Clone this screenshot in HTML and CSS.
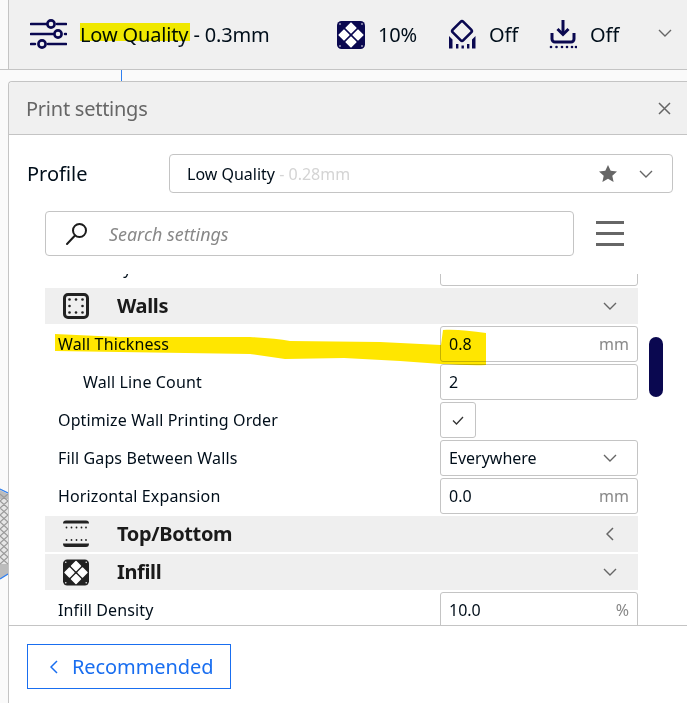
FILE: index.html
```html
<!DOCTYPE html>
<html lang="en">
<head>
<meta charset="utf-8">
<title>Print settings</title>
<link rel="stylesheet" href="styles.css">
</head>
<body>
<svg class="defs" width="0" height="0" aria-hidden="true">
  <symbol id="chev-down" viewBox="0 0 14 8"><path d="M1 1l6 6 6-6" fill="none" stroke="currentColor" stroke-width="1.4"/></symbol>
  <symbol id="chev-left" viewBox="0 0 8 14"><path d="M7 1L1 7l6 6" fill="none" stroke="currentColor" stroke-width="1.5"/></symbol>
  <symbol id="infill" viewBox="0 0 28 28">
    <rect x="0" y="0" width="28" height="28" rx="4.5" fill="currentColor"/>
    <g fill="#fff" stroke="#fff" stroke-width="1.6" stroke-linejoin="round">
      <path d="M14 2.200l4.800 4.800-4.800 4.800L9.200 7z"/>
      <path d="M7 9.200l4.800 4.800L7 18.800 2.200 14z"/>
      <path d="M21 9.200l4.800 4.800-4.800 4.800-4.800-4.800z"/>
      <path d="M14 16.200l4.800 4.800-4.800 4.800L9.200 21z"/>
    </g>
    <g fill="#fff">
      <circle cx="3" cy="3" r=".8"/><circle cx="25" cy="3" r=".8"/><circle cx="3" cy="25" r=".8"/><circle cx="25" cy="25" r=".8"/>
    </g>
  </symbol>
</svg>

<div class="page">
  <header class="topbar">
    <svg class="icon-sliders" width="37" height="30" viewBox="0 0 37 30">
      <g fill="none" stroke="#0a0850" stroke-width="2.6" stroke-linecap="round">
        <path d="M1 5h16M27 5h9M1 15h22M35 15h1M1 25h4M18 25h18"/>
        <circle cx="21" cy="5" r="3.6"/><circle cx="28" cy="15" r="3.6"/><circle cx="12" cy="25" r="3.6"/>
      </g>
    </svg>
    <span class="top-title">Low Quality - 0.3mm</span>
    <div class="top-item item-infill">
      <svg class="top-icon" width="28" height="28"><use href="#infill"/></svg>
      <span>10%</span>
    </div>
    <div class="top-item item-support">
      <svg class="top-icon" width="28" height="30" viewBox="0 0 28 30">
        <rect x="6.500" y="4.500" width="15" height="15" rx="2" transform="rotate(45 14 12)" fill="none" stroke="#0a0850" stroke-width="2.600"/>
        <g fill="#0a0850">
          <path d="M1 17l3.500 3.500V29.500H1zM27.500 17L24 20.500V29.500h3.500z"/>
          <rect x="8" y="25" width="2.400" height="4.500"/><rect x="13.500" y="26.500" width="2.400" height="3"/><rect x="19" y="25" width="2.400" height="4.500"/>
        </g>
      </svg>
      <span>Off</span>
    </div>
    <div class="top-item item-adhesion">
      <svg class="top-icon" width="28" height="30" viewBox="0 0 28 30">
        <g fill="none" stroke="#0a0850" stroke-width="3">
          <path d="M14 1v14"/><path d="M8.500 10l5.500 5.500 5.500-5.500"/>
          <path d="M3 14v6a3 3 0 0 0 3 3h16a3 3 0 0 0 3-3v-6"/>
        </g>
        <g fill="#0a0850"><circle cx="2" cy="28" r="1.300"/><circle cx="7.500" cy="28" r="1.300"/><circle cx="13" cy="28" r="1.300"/><circle cx="18" cy="28" r="1.300"/><circle cx="23" cy="28" r="1.300"/><circle cx="27" cy="28" r="1.300"/></g>
      </svg>
      <span>Off</span>
    </div>
    <svg class="chev chev-top" width="14" height="8"><use href="#chev-down"/></svg>
  </header>

  <div class="canvas-gap"></div>

  <section class="panel">
    <div class="panel-head">
      <span class="panel-title">Print settings</span>
      <svg class="close" width="13" height="13" viewBox="0 0 13 13"><path d="M1 1l11 11M12 1L1 12" stroke="#666" stroke-width="1.500" fill="none"/></svg>
    </div>

    <div class="profile-row">
      <span class="profile-label">Profile</span>
      <div class="profile-select">
        <span class="profile-name">Low Quality</span><span class="profile-detail"> - 0.28mm</span>
        <svg class="star" width="18" height="17" viewBox="0 0 18 17"><path d="M9 0l2.700 5.800 6.300.700-4.700 4.200 1.300 6.300L9 13.800 3.400 17l1.300-6.300L0 6.500l6.300-.700z" fill="#666"/></svg>
        <svg class="chev chev-select" width="14" height="8"><use href="#chev-down"/></svg>
      </div>
    </div>

    <div class="search-row">
      <div class="search-box">
        <svg class="search-icon" width="24" height="24" viewBox="0 0 24 24"><g fill="none" stroke="#1c1c1c" stroke-width="2"><circle cx="14.500" cy="8.500" r="6.500"/><path d="M10 13.500L2 22" stroke-linecap="round"/></g></svg>
        <span class="search-text">Search settings</span>
      </div>
      <div class="hamburger"><i></i><i></i><i></i></div>
    </div>

    <div class="list-view">
      <div class="list">
        <div class="row"><span class="row-label">Initial Layer</span><div class="field"></div></div>

        <div class="cat">
          <svg class="cat-icon" width="26" height="26" viewBox="0 0 26 26">
            <rect x="1.500" y="1.500" width="23" height="23" rx="3.500" fill="none" stroke="#222" stroke-width="3"/>
            <g fill="#222"><circle cx="6.500" cy="6.500" r="1.300"/><circle cx="13" cy="6.500" r="1.300"/><circle cx="19.500" cy="6.500" r="1.300"/><circle cx="6.500" cy="13" r="1.300"/><circle cx="19.500" cy="13" r="1.300"/><circle cx="6.500" cy="19.500" r="1.300"/><circle cx="13" cy="19.500" r="1.300"/><circle cx="19.500" cy="19.500" r="1.300"/></g>
          </svg>
          <span class="cat-title">Walls</span>
          <svg class="chev cat-chev" width="14" height="8"><use href="#chev-down"/></svg>
        </div>

        <div class="row"><span class="row-label">Wall Thickness</span><div class="field"><span>0.8</span><span class="unit">mm</span></div></div>
        <div class="row"><span class="row-label indent">Wall Line Count</span><div class="field"><span>2</span></div></div>
        <div class="row"><span class="row-label">Optimize Wall Printing Order</span><div class="check"><svg width="12" height="9" viewBox="0 0 12 9"><path d="M1 4.500L4.500 8 11 1" fill="none" stroke="#333" stroke-width="1.300"/></svg></div></div>
        <div class="row"><span class="row-label">Fill Gaps Between Walls</span><div class="field"><span>Everywhere</span><svg class="chev field-chev" width="14" height="8"><use href="#chev-down"/></svg></div></div>
        <div class="row"><span class="row-label">Horizontal Expansion</span><div class="field"><span>0.0</span><span class="unit">mm</span></div></div>

        <div class="cat">
          <svg class="cat-icon" width="26" height="28" viewBox="0 0 26 28">
            <path d="M0 3.500q0-3 3-3h20q3 0 3 3z" fill="#222"/>
            <path d="M0 23.500q0 3.500 3 3.500h20q3 0 3-3.500z" fill="#222"/>
            <g fill="#222"><circle cx="3.500" cy="7.500" r=".9"/><circle cx="8.500" cy="7.500" r=".9"/><circle cx="13.500" cy="7.500" r=".9"/><circle cx="18.500" cy="7.500" r=".9"/><circle cx="23" cy="7.500" r=".9"/><circle cx="3.500" cy="20" r=".9"/><circle cx="8.500" cy="20" r=".9"/><circle cx="13.500" cy="20" r=".9"/><circle cx="18.500" cy="20" r=".9"/><circle cx="23" cy="20" r=".9"/></g>
          </svg>
          <span class="cat-title">Top/Bottom</span>
          <svg class="chev cat-chev-left" width="8" height="14"><use href="#chev-left"/></svg>
        </div>

        <div class="cat">
          <svg class="cat-icon dark" width="27" height="27"><use href="#infill"/></svg>
          <span class="cat-title">Infill</span>
          <svg class="chev cat-chev" width="14" height="8"><use href="#chev-down"/></svg>
        </div>

        <div class="row"><span class="row-label">Infill Density</span><div class="field"><span>10.0</span><span class="unit">%</span></div></div>
      </div>
      <div class="scrollbar"></div>
    </div>

    <footer class="panel-foot">
      <button class="recommended" type="button">
        <svg width="8" height="14"><use href="#chev-left"/></svg>
        <span>Recommended</span>
      </button>
    </footer>
  </section>

  <svg class="model" width="8" height="92" viewBox="0 0 8 92">
    <path d="M0 2l8 4v80l-8 5z" fill="#e6e6e6"/>
    <path d="M0 2l8 4v5H0zM0 76h8v10l-8 5z" fill="#bcbcbc"/>
    <path d="M0 6l8 7-8 7 8 7-8 7 8 7-8 7 8 7-8 7 8 7-8 7M8 6l-8 7 8 7-8 7 8 7-8 7 8 7-8 7 8 7-8 7 8 7" fill="none" stroke="#9a9a9a" stroke-width="1.200"/>
    <path d="M0 1l8 4M0 91l8-5" fill="none" stroke="#2f7ff0" stroke-width="1.300"/>
  </svg>
  <div class="model-edge"></div>

  <svg class="marks" width="687" height="703" viewBox="0 0 687 703" aria-hidden="true">
    <rect x="80" y="23" width="110" height="18" fill="#fff700"/>
    <path d="M55 334L120 337L250 337Q275 338 290 341L380 342L441 345L443 330C455 329 470 331 486 333L486 365C470 366 455 364 441 364L400 361L344 358L285 359L250 354L120 352L55 351Z" fill="#ffe600"/>
  </svg>
</div>
</body>
</html>
```
FILE: styles.css
```css
* { box-sizing: border-box; }
html, body { margin: 0; padding: 0; }
body {
  width: 687px;
  height: 703px;
  overflow: hidden;
  background: #fafafa;
  font-family: "Noto Sans", sans-serif;
  font-size: 16px;
  color: #000e1a;
}
.defs { position: absolute; }
.page {
  position: relative;
  width: 687px;
  height: 703px;
  display: flex;
  flex-direction: column;
  overflow: hidden;
}

/* top bar */
.topbar {
  flex: none;
  height: 70px;
  display: flex;
  align-items: center;
  border-bottom: 1px solid #c4c4c4;
  background: linear-gradient(to right, #fafafa 8px, #c4c4c4 8px, #c4c4c4 9px, #f0f0f0 9px);
  padding-left: 30px;
  font-size: 20px;
}
.icon-sliders { flex: none; margin-top: -1px; }
.top-title { margin-left: 13px; width: 257px; white-space: nowrap; letter-spacing: -0.15px; }
.top-item { display: flex; align-items: center; white-space: nowrap; }
.top-icon { flex: none; display: block; color: #0a0850; }
.item-infill { width: 111px; gap: 13px; letter-spacing: -0.2px; }
.item-support { width: 101px; gap: 13px; margin-top: -2px; }
.item-adhesion { width: 109px; gap: 13px; margin-top: -2px; }
.item-support span, .item-adhesion span { margin-top: 2px; }
.chev { flex: none; display: block; color: #666; }
.chev-top { margin-top: -3px; }

.canvas-gap { flex: none; height: 11px; }

/* panel */
.panel {
  flex: 1;
  min-height: 0;
  margin-left: 8px;
  background: #fff;
  border: 1px solid #c4c4c4;
  border-right: 0;
  border-bottom: 0;
  border-top-left-radius: 4px;
  display: flex;
  flex-direction: column;
}
.panel-head {
  flex: none;
  height: 53px;
  background: #f0f0f0;
  border-bottom: 1px solid #c4c4c4;
  border-top-left-radius: 4px;
  padding: 0 16px 0 17px;
  display: flex;
  align-items: center;
  justify-content: space-between;
}
.panel-title { font-size: 20px; color: #666; letter-spacing: -0.25px; }
.close { display: block; }

.profile-row {
  flex: none;
  display: flex;
  align-items: center;
  margin-top: 19px;
  padding: 0 14px 0 18px;
}
.profile-label { width: 142px; font-size: 20px; }
.profile-select {
  flex: 1;
  height: 39px;
  border: 1px solid #c4c4c4;
  border-radius: 4px;
  display: flex;
  align-items: center;
  padding: 0 19px 0 17px;
  white-space: pre;
}
.profile-detail { color: #d4d4d4; }
.star { margin-left: auto; display: block; }
.chev-select { margin-left: 22px; }

.search-row {
  flex: none;
  display: flex;
  align-items: center;
  margin-top: 18px;
  padding-left: 36px;
}
.search-box {
  width: 529px;
  height: 45px;
  border: 1px solid #c4c4c4;
  border-radius: 4px;
  display: flex;
  align-items: center;
  padding-left: 19px;
}
.search-icon { display: block; flex: none; }
.search-text {
  margin-left: 20px;
  font-size: 17.9px;
  font-style: italic;
  color: #888;
}
.hamburger {
  margin-left: 22px;
  width: 28px;
  display: flex;
  flex-direction: column;
  gap: 8px;
}
.hamburger i { display: block; height: 3px; background: #666; }

/* settings list */
.list-view {
  flex: 1;
  min-height: 0;
  margin-top: 18px;
  position: relative;
  overflow: hidden;
}
.list {
  margin: -24px 0 0 36px;
  width: 593px;
}
.row {
  height: 36px;
  margin-bottom: 2px;
  display: flex;
  align-items: center;
  justify-content: space-between;
  padding-left: 13px;
}
.row-label { white-space: nowrap; letter-spacing: 0.13px; }
.row-label.indent { padding-left: 25px; }
.field {
  width: 198px;
  height: 36px;
  border: 1px solid #c4c4c4;
  border-radius: 3px;
  background: #fff;
  display: flex;
  align-items: center;
  justify-content: space-between;
  padding: 0 8px;
}
.unit { color: #888; }
.field-chev { margin-right: 12px; }
.check {
  width: 36px;
  height: 36px;
  margin-right: 162px;
  border: 1px solid #c4c4c4;
  border-radius: 3px;
  display: flex;
  align-items: center;
  justify-content: center;
}
.check svg { display: block; }
.cat {
  height: 36px;
  margin-bottom: 2px;
  background: #efefef;
  display: flex;
  align-items: center;
  padding-left: 18px;
}
.cat-icon { flex: none; display: block; width: 26px; }
.cat-icon.dark { color: #222; }
.cat-title {
  margin: -2px 0 0 28px;
  font-size: 20px;
  font-weight: 700;
  letter-spacing: -0.35px;
  color: #1a1a1a;
}
.cat-chev { margin-left: auto; margin-right: 21px; }
.cat-chev-left { margin-left: auto; margin-right: 24px; }
.scrollbar {
  position: absolute;
  left: 640px;
  top: 63px;
  width: 14px;
  height: 60px;
  border-radius: 7px;
  background: #0a0850;
}

.panel-foot {
  flex: none;
  height: 78px;
  border-top: 1px solid #c4c4c4;
  padding: 18px 0 0 18px;
}
.recommended {
  width: 204px;
  height: 45px;
  background: #fff;
  border: 1px solid #196ef0;
  color: #196ef0;
  font: 20px "Noto Sans", sans-serif;
  letter-spacing: -0.08px;
  display: flex;
  align-items: center;
  padding: 0 0 0 22px;
  gap: 14px;
}
.recommended svg { display: block; flex: none; }

/* overlays: viewport model sliver and hand-drawn highlighter marks */
.model { position: absolute; left: 0; top: 488px; }
.model-edge {
  position: absolute;
  left: 121px;
  top: 70px;
  width: 1px;
  height: 11px;
  background: #2f7ff0;
}
.marks {
  position: absolute;
  left: 0;
  top: 0;
  mix-blend-mode: multiply;
  pointer-events: none;
}
```
